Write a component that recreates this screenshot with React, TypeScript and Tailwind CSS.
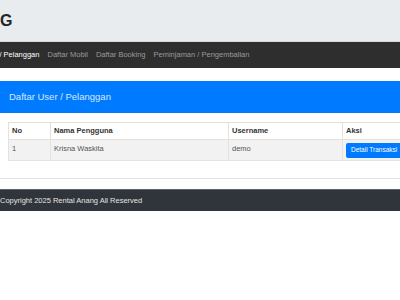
import React from 'react';

const navItems = ['Daftar Mobil', 'Daftar Booking', 'Peminjaman / Pengembalian'];

const App: React.FC = () => {
  return (
    <div className="w-[400px] h-[300px] overflow-hidden bg-white font-['Liberation_Sans',Arial,sans-serif]">
      {/* top banner, title scrolled off to the left */}
      <div className="h-[42px] bg-[#e9ecef] border-b border-[#d5d8dc] flex items-center">
        <div className="text-[16px] font-bold leading-none text-[#212529] mt-[1px]">G</div>
      </div>

      {/* navbar */}
      <nav className="h-[26px] bg-[#2e2e2e] flex items-center gap-2 whitespace-nowrap text-[7.5px] leading-none">
        <span className="text-white -ml-[41px]">Daftar User / Pelanggan</span>
        {navItems.map((item) => (
          <span key={item} className="text-[#9a9a9a]">
            {item}
          </span>
        ))}
      </nav>

      {/* card */}
      <div className="mt-[13px] border-b border-[#e3e3e3]">
        <div className="h-[32px] bg-[#007bff] flex items-center pl-[9px] text-[9.5px] text-[#d6e9ff]">
          Daftar User / Pelanggan
        </div>
        <div className="pt-[9px] pb-[17px] pl-[8px]">
          <table className="border-collapse text-[7.5px] leading-none text-[#333] w-[404px] table-fixed">
            <colgroup>
              <col className="w-[42px]" />
              <col className="w-[178px]" />
              <col className="w-[114px]" />
              <col className="w-[70px]" />
            </colgroup>
            <thead>
              <tr className="h-[17px] bg-white">
                <th className="border border-[#e6e0dc] px-[3px] text-left font-bold">No</th>
                <th className="border border-[#e6e0dc] px-[3px] text-left font-bold">Nama Pengguna</th>
                <th className="border border-[#e6e0dc] px-[3px] text-left font-bold">Username</th>
                <th className="border border-[#e6e0dc] px-[3px] text-left font-bold">Aksi</th>
              </tr>
            </thead>
            <tbody>
              <tr className="h-[21px] bg-[#f2f2f2] text-[#555]">
                <td className="border border-[#e3e3e3] px-[3px] align-top pt-[5px]">1</td>
                <td className="border border-[#e3e3e3] px-[3px] align-top pt-[5px]">Krisna Waskita</td>
                <td className="border border-[#e3e3e3] px-[3px] align-top pt-[5px]">demo</td>
                <td className="border border-[#e3e3e3] px-[3px] align-middle">
                  <button className="h-[15px] px-[5px] rounded-[2px] bg-[#007bff] text-[6.5px] leading-none text-white whitespace-nowrap">
                    Detail Transaksi
                  </button>
                </td>
              </tr>
            </tbody>
          </table>
        </div>
      </div>

      {/* footer */}
      <footer className="mt-[10px] h-[22px] bg-[#30353b] border-t border-[#5c636a] flex items-center whitespace-nowrap text-[7.5px] leading-none text-[#e4e4e4]">
        Copyright 2025 Rental Anang All Reserved
      </footer>
    </div>
  );
};

export default App;
